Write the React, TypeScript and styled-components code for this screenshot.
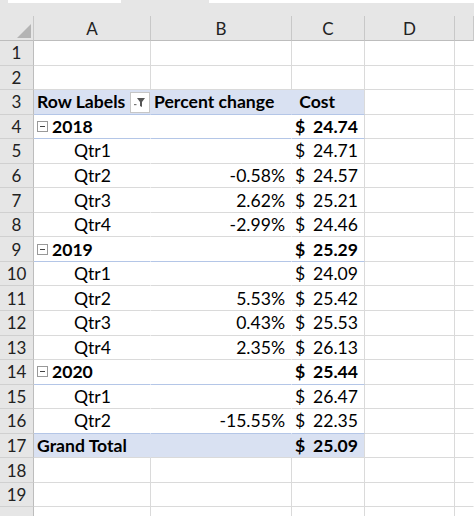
import React from "react";
import styled, { createGlobalStyle } from "styled-components";

const Global = createGlobalStyle`
  body { margin: 0; background: #fff; font-family: Lato, "Open Sans", sans-serif; }
`;

const TopStrip = styled.div`
  height: 16px;
  background: #e6e6e6;
  display: flex;
  gap: 44px;
  padding-left: 8px;
`;

const TopBox = styled.div<{ w: number }>`
  width: ${(p) => p.w}px;
  height: 3px;
  background: #fff;
`;

const Grid = styled.div`
  display: grid;
  grid-template-columns: 34px 117px 141px 73px 90px 1fr;
  grid-template-rows: 25px repeat(20, 24.55px);
  font-size: 17.6px;
  color: #000;
`;

const ColHead = styled.div`
  background: #e6e6e6;
  border-right: 1px solid #c8c8c8;
  border-bottom: 1px solid #bdbdbd;
  display: flex;
  align-items: center;
  justify-content: center;
  color: #222;
  font-size: 17px;
  position: relative;
`;

const Corner = styled.div`
  position: absolute;
  right: 2px;
  bottom: 2px;
  width: 0;
  height: 0;
  border-left: 14px solid transparent;
  border-bottom: 14px solid #b4b4b4;
`;

const RowHead = styled.div`
  background: #e6e6e6;
  border-right: 1px solid #bdbdbd;
  border-bottom: 1px solid #d0d0d0;
  display: flex;
  align-items: center;
  justify-content: center;
  color: #222;
  font-size: 17px;
`;

const Cell = styled.div<{ blue?: boolean; bold?: boolean; right?: boolean; indent?: boolean; topLine?: boolean; noRight?: boolean }>`
  background: ${(p) => (p.blue ? "#d9e1f2" : "#fff")};
  border-right: 1px solid ${(p) => (p.noRight ? "transparent" : "#dadada")};
  border-bottom: 1px solid ${(p) => (p.topLine ? "#b4c6e7" : "#dadada")};
  display: flex;
  align-items: center;
  justify-content: ${(p) => (p.right ? "flex-end" : "flex-start")};
  padding: 0 ${(p) => (p.right ? "6px" : "3px")} 0 ${(p) => (p.indent ? "40px" : "3px")};
  font-weight: ${(p) => (p.bold ? 700 : 400)};
  white-space: nowrap;
  overflow: hidden;
  position: relative;
`;

const FilterBtn = styled.span`
  position: absolute;
  right: 0px;
  top: 2px;
  width: 18px;
  height: 19px;
  background: #fff;
  border: 1px solid #c6c6c6;
  display: flex;
  align-items: center;
  justify-content: center;
`;

const Minus = styled.span`
  width: 9px;
  height: 9px;
  border: 1px solid #999;
  margin-right: 4px;
  display: flex;
  align-items: center;
  justify-content: center;
  &::after { content: ""; width: 5px; height: 1px; background: #444; }
`;

const DollarWrap = styled.span<{ bold?: boolean }>`
  display: flex;
  width: 100%;
  justify-content: space-between;
  font-weight: ${(p) => (p.bold ? 700 : 400)};
`;

type R = { a?: string; b?: string; c?: string; kind?: "head" | "year" | "q" | "total" };

const rows: R[] = [
  {}, {},
  { kind: "head" },
  { kind: "year", a: "2018", c: "$24.74" },
  { kind: "q", a: "Qtr1", c: "$24.71" },
  { kind: "q", a: "Qtr2", b: "-0.58%", c: "$24.57" },
  { kind: "q", a: "Qtr3", b: "2.62%", c: "$25.21" },
  { kind: "q", a: "Qtr4", b: "-2.99%", c: "$24.46" },
  { kind: "year", a: "2019", c: "$25.29" },
  { kind: "q", a: "Qtr1", c: "$24.09" },
  { kind: "q", a: "Qtr2", b: "5.53%", c: "$25.42" },
  { kind: "q", a: "Qtr3", b: "0.43%", c: "$25.53" },
  { kind: "q", a: "Qtr4", b: "2.35%", c: "$26.13" },
  { kind: "year", a: "2020", c: "$25.44" },
  { kind: "q", a: "Qtr1", c: "$26.47" },
  { kind: "q", a: "Qtr2", b: "-15.55%", c: "$22.35" },
  { kind: "total" },
  {}, {}, {},
];

const Dollar = ({ v, bold }: { v: string; bold?: boolean }) => (
  <DollarWrap bold={bold}>
    <span>$</span><span>{v.slice(1)}</span>
  </DollarWrap>
);

export default function App() {
  return (
    <>
      <Global />
      <TopStrip>
        <TopBox w={128} />
        <TopBox w={0} />
        <TopBox w={300} />
      </TopStrip>
      <Grid>
        <ColHead><Corner /></ColHead>
        {["A", "B", "C", "D", ""].map((c, k) => (
          <ColHead key={k}>{c}</ColHead>
        ))}
        {rows.map((r, i) => {
          const n = i + 1;
          const label = n === 20 ? "" : String(n);
          if (r.kind === "head")
            return (
              <React.Fragment key={i}>
                <RowHead>{label}</RowHead>
                <Cell blue bold noRight topLine>Row Labels
                  <FilterBtn>
                    <svg width="12" height="11" viewBox="0 0 12 11">
                      <path d="M3 1h8L8 5v5L6 9V5z" fill="#555" />
                      <rect x="0" y="7" width="2.5" height="1.2" fill="#777" />
                    </svg>
                  </FilterBtn>
                </Cell>
                <Cell blue bold noRight topLine>Percent change</Cell>
                <Cell blue bold topLine>&nbsp;Cost</Cell>
                <Cell /><Cell noRight />
              </React.Fragment>
            );
          if (r.kind === "total")
            return (
              <React.Fragment key={i}>
                <RowHead>{label}</RowHead>
                <Cell blue bold noRight>Grand Total</Cell>
                <Cell blue noRight />
                <Cell blue bold right><Dollar v="$25.09" bold /></Cell>
                <Cell /><Cell noRight />
              </React.Fragment>
            );
          if (r.kind === "year")
            return (
              <React.Fragment key={i}>
                <RowHead>{label}</RowHead>
                <Cell bold noRight topLine><Minus />{r.a}</Cell>
                <Cell noRight topLine />
                <Cell bold right topLine><Dollar v={r.c!} bold /></Cell>
                <Cell /><Cell noRight />
              </React.Fragment>
            );
          if (r.kind === "q")
            return (
              <React.Fragment key={i}>
                <RowHead>{label}</RowHead>
                <Cell indent noRight topLine={n === 16}>{r.a}</Cell>
                <Cell right noRight topLine={n === 16}>{r.b}</Cell>
                <Cell right topLine={n === 16}><Dollar v={r.c!} /></Cell>
                <Cell /><Cell noRight />
              </React.Fragment>
            );
          return (
            <React.Fragment key={i}>
              <RowHead>{label}</RowHead>
              <Cell /><Cell /><Cell /><Cell /><Cell noRight />
            </React.Fragment>
          );
        })}
      </Grid>
    </>
  );
}
